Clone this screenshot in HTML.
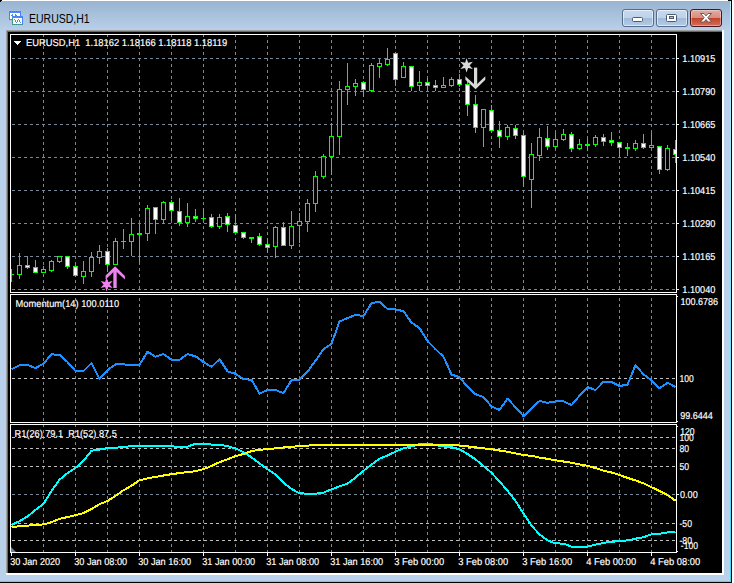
<!DOCTYPE html>
<html><head><meta charset="utf-8"><title>EURUSD,H1</title>
<style>
html,body{margin:0;padding:0;background:#fff;}
body{width:734px;height:583px;overflow:hidden;position:relative;font-family:"Liberation Sans",sans-serif;}
#win{position:absolute;left:0;top:1px;width:730px;height:580px;background:#b9d1ea;}
#cap{position:absolute;left:0;top:0;width:730px;height:30px;background:linear-gradient(#99b4d1,#b9d1ea);}
#edgeR{position:absolute;left:730px;top:1px;width:1px;height:581px;background:linear-gradient(#b4eeff,#42d8f8);}
#edgeB{position:absolute;left:0;top:581px;width:731px;height:1px;background:#42d8f8;}
#blkR{position:absolute;left:731px;top:0;width:1px;height:583px;background:#000;}
#blkB{position:absolute;left:0;top:582px;width:732px;height:1px;background:#000;}
#c1{position:absolute;left:0;top:0;width:2px;height:1px;background:#000}
#c2{position:absolute;left:0;top:0;width:1px;height:2px;background:#000}
#c3{position:absolute;left:728px;top:0;width:4px;height:1px;background:#000}
#bl1{position:absolute;left:6px;top:30px;width:716px;height:543px;background:#a0a0a0;}
#bl2{position:absolute;left:7px;top:31px;width:715px;height:542px;background:#696969;}
#wh{position:absolute;left:6px;top:30px;width:718px;height:545px;background:#fff;}
#title{position:absolute;left:28.6px;top:11px;transform:scaleX(0.84);font-size:12.5px;line-height:16px;color:#000;white-space:nowrap;transform-origin:0 0;}
.btn{position:absolute;top:9px;width:30px;height:16px;border:1px solid #566a89;border-radius:3px;box-shadow:inset 0 0 0 1px rgba(255,255,255,.55);}
.btn.n{background:linear-gradient(#c7d9ee 0%,#bed2ea 47%,#9fb9d8 50%,#b5cce6 100%);}
.btn.c{border-color:#4a1620;background:linear-gradient(#e3ada1 0%,#d88e80 47%,#c1412a 50%,#d26f55 100%);box-shadow:inset 0 0 0 1px rgba(255,255,255,.35);}
#chart{position:absolute;left:0;top:0;}
</style></head><body>
<div id="win"><div id="cap"></div></div>
<div id="edgeR"></div><div id="edgeB"></div><div id="blkR"></div><div id="blkB"></div>
<div id="c1"></div><div id="c2"></div><div id="c3"></div>
<div id="wh"></div><div id="bl1"></div><div id="bl2"></div>
<svg style="position:absolute;left:8px;top:10px" width="16" height="16" viewBox="0 0 16 16" shape-rendering="crispEdges">
<rect x="1" y="1" width="12" height="9" rx="1" fill="#4d88ff"/><rect x="2" y="3" width="10" height="6" fill="#fffef4"/>
<rect x="1.5" y="1.5" width="11" height="8" fill="none" stroke="#3f8f86" stroke-width="1" stroke-dasharray="1 1"/>
<rect x="3" y="5" width="2" height="1" fill="#4d88ff"/>
<rect x="4" y="4" width="1" height="1" fill="#4d88ff"/>
<rect x="7" y="4" width="1" height="1" fill="#4d88ff"/>
<rect x="7" y="5" width="2" height="1" fill="#4d88ff"/>
<rect x="8" y="6" width="2" height="1" fill="#4d88ff"/>
<rect x="4" y="6" width="11" height="9" rx="1" fill="#4d88ff"/><rect x="5" y="8" width="9" height="6" fill="#fffef4"/>
<rect x="4.5" y="6.5" width="10" height="8" fill="none" stroke="#3f8f86" stroke-width="1" stroke-dasharray="1 1"/>
<rect x="6" y="9" width="1" height="1" fill="#4d88ff"/>
<rect x="7" y="10" width="1" height="1" fill="#4d88ff"/>
<rect x="7" y="11" width="1" height="1" fill="#4d88ff"/>
<rect x="8" y="12" width="1" height="1" fill="#4d88ff"/>
<rect x="9" y="11" width="1" height="1" fill="#4d88ff"/>
<rect x="9" y="10" width="1" height="1" fill="#4d88ff"/>
<rect x="10" y="9" width="1" height="1" fill="#4d88ff"/>
<rect x="11" y="10" width="1" height="1" fill="#4d88ff"/>
<rect x="11" y="11" width="1" height="1" fill="#4d88ff"/>
<rect x="12" y="12" width="1" height="1" fill="#4d88ff"/>
</svg>
<div id="title">EURUSD,H1</div>
<div class="btn n" style="left:622px"></div>
<div class="btn n" style="left:656px"></div>
<div class="btn c" style="left:690px"></div>
<svg style="position:absolute;left:622px;top:9px" width="100" height="18" viewBox="0 0 100 18">
<rect x="10.5" y="8.5" width="10" height="4" rx="1" fill="#fff" stroke="#4b5b74" stroke-width="1"/>
<rect x="44.5" y="5.5" width="10" height="7" rx="1" fill="#fff" stroke="#4b5b74" stroke-width="1"/>
<rect x="47.5" y="7.5" width="4" height="2" fill="#a9c3e1" stroke="#4b5b74" stroke-width="1"/>
<path d="M78.5 4.5h3.5l2 2.4 2-2.4h3.5l-3.7 4.2 3.7 4.3h-3.5l-2-2.5-2 2.5h-3.5l3.7-4.3z" fill="#fff" stroke="#6b5a5e" stroke-width="1" stroke-linejoin="round"/>
</svg>
<svg id="chart" width="734" height="583" viewBox="0 0 734 583" shape-rendering="crispEdges" font-family="'Liberation Sans', sans-serif">
<rect x="8" y="32" width="714" height="541" fill="#000"/>
<g stroke="#778899" stroke-width="1" stroke-dasharray="3 3" fill="none">
<line x1="43.5" y1="34" x2="43.5" y2="552"/>
<line x1="75.5" y1="34" x2="75.5" y2="552"/>
<line x1="107.5" y1="34" x2="107.5" y2="552"/>
<line x1="139.5" y1="34" x2="139.5" y2="552"/>
<line x1="171.5" y1="34" x2="171.5" y2="552"/>
<line x1="203.5" y1="34" x2="203.5" y2="552"/>
<line x1="235.5" y1="34" x2="235.5" y2="552"/>
<line x1="267.5" y1="34" x2="267.5" y2="552"/>
<line x1="299.5" y1="34" x2="299.5" y2="552"/>
<line x1="331.5" y1="34" x2="331.5" y2="552"/>
<line x1="363.5" y1="34" x2="363.5" y2="552"/>
<line x1="395.5" y1="34" x2="395.5" y2="552"/>
<line x1="427.5" y1="34" x2="427.5" y2="552"/>
<line x1="459.5" y1="34" x2="459.5" y2="552"/>
<line x1="491.5" y1="34" x2="491.5" y2="552"/>
<line x1="523.5" y1="34" x2="523.5" y2="552"/>
<line x1="555.5" y1="34" x2="555.5" y2="552"/>
<line x1="587.5" y1="34" x2="587.5" y2="552"/>
<line x1="619.5" y1="34" x2="619.5" y2="552"/>
<line x1="651.5" y1="34" x2="651.5" y2="552"/>
<line x1="12" y1="58.5" x2="676" y2="58.5"/>
<line x1="12" y1="91.5" x2="676" y2="91.5"/>
<line x1="12" y1="124.5" x2="676" y2="124.5"/>
<line x1="12" y1="157.5" x2="676" y2="157.5"/>
<line x1="12" y1="190.5" x2="676" y2="190.5"/>
<line x1="12" y1="223.5" x2="676" y2="223.5"/>
<line x1="12" y1="256.5" x2="676" y2="256.5"/>
<line x1="12" y1="289.5" x2="676" y2="289.5"/>
<line x1="12" y1="494.5" x2="676" y2="494.5"/>
</g>
<g stroke="#c0c0c0" stroke-width="1" stroke-dasharray="3 3" fill="none">
<line x1="12" y1="378.5" x2="676" y2="378.5"/>
<line x1="12" y1="437.5" x2="676" y2="437.5"/>
<line x1="12" y1="448.5" x2="676" y2="448.5"/>
<line x1="12" y1="466.5" x2="676" y2="466.5"/>
<line x1="12" y1="523.5" x2="676" y2="523.5"/>
<line x1="12" y1="540.5" x2="676" y2="540.5"/>
</g>
<rect x="8" y="293" width="714" height="1" fill="#000"/>
<rect x="8" y="423" width="714" height="1" fill="#000"/>
<rect x="10.5" y="34.5" width="666" height="258" fill="none" stroke="#fff" stroke-width="1"/>
<rect x="10.5" y="294.5" width="666" height="128" fill="none" stroke="#fff" stroke-width="1"/>
<rect x="10.5" y="424.5" width="666" height="128" fill="none" stroke="#fff" stroke-width="1"/>
<g id="candles">
<rect x="11" y="269" width="1" height="13" fill="#00ff00"/>
<rect x="11" y="274" width="3" height="1" fill="#00ff00"/>
<rect x="19" y="253" width="1" height="26" fill="#00ff00"/>
<rect x="17" y="265" width="5" height="10" fill="#00ff00"/>
<rect x="18" y="266" width="3" height="8" fill="#000"/>
<rect x="27" y="256" width="1" height="13" fill="#00ff00"/>
<rect x="25" y="265" width="5" height="3" fill="#00ff00"/>
<rect x="26" y="266" width="3" height="1" fill="#fff"/>
<rect x="35" y="260" width="1" height="13" fill="#00ff00"/>
<rect x="33" y="267" width="5" height="6" fill="#00ff00"/>
<rect x="34" y="268" width="3" height="4" fill="#fff"/>
<rect x="43" y="266" width="1" height="7" fill="#00ff00"/>
<rect x="41" y="269" width="5" height="4" fill="#00ff00"/>
<rect x="42" y="270" width="3" height="2" fill="#000"/>
<rect x="51" y="260" width="1" height="12" fill="#00ff00"/>
<rect x="49" y="261" width="5" height="10" fill="#00ff00"/>
<rect x="50" y="262" width="3" height="8" fill="#000"/>
<rect x="59" y="256" width="1" height="7" fill="#00ff00"/>
<rect x="57" y="256" width="5" height="6" fill="#00ff00"/>
<rect x="58" y="257" width="3" height="4" fill="#000"/>
<rect x="67" y="256" width="1" height="13" fill="#00ff00"/>
<rect x="65" y="256" width="5" height="11" fill="#00ff00"/>
<rect x="66" y="257" width="3" height="9" fill="#fff"/>
<rect x="75" y="265" width="1" height="12" fill="#00ff00"/>
<rect x="73" y="266" width="5" height="10" fill="#00ff00"/>
<rect x="74" y="267" width="3" height="8" fill="#fff"/>
<rect x="83" y="261" width="1" height="23" fill="#00ff00"/>
<rect x="81" y="271" width="5" height="6" fill="#00ff00"/>
<rect x="82" y="272" width="3" height="4" fill="#000"/>
<rect x="91" y="252" width="1" height="25" fill="#00ff00"/>
<rect x="89" y="257" width="5" height="15" fill="#00ff00"/>
<rect x="90" y="258" width="3" height="13" fill="#000"/>
<rect x="99" y="245" width="1" height="19" fill="#00ff00"/>
<rect x="97" y="251" width="5" height="7" fill="#00ff00"/>
<rect x="98" y="252" width="3" height="5" fill="#000"/>
<rect x="107" y="248" width="1" height="24" fill="#00ff00"/>
<rect x="105" y="251" width="5" height="14" fill="#00ff00"/>
<rect x="106" y="252" width="3" height="12" fill="#fff"/>
<rect x="115" y="238" width="1" height="27" fill="#00ff00"/>
<rect x="113" y="241" width="5" height="24" fill="#00ff00"/>
<rect x="114" y="242" width="3" height="22" fill="#000"/>
<rect x="123" y="229" width="1" height="20" fill="#00ff00"/>
<rect x="121" y="241" width="5" height="1" fill="#00ff00"/>
<rect x="131" y="218" width="1" height="38" fill="#00ff00"/>
<rect x="129" y="234" width="5" height="8" fill="#00ff00"/>
<rect x="130" y="235" width="3" height="6" fill="#000"/>
<rect x="139" y="224" width="1" height="38" fill="#00ff00"/>
<rect x="137" y="233" width="5" height="2" fill="#00ff00"/>
<rect x="147" y="205" width="1" height="36" fill="#00ff00"/>
<rect x="145" y="208" width="5" height="26" fill="#00ff00"/>
<rect x="146" y="209" width="3" height="24" fill="#000"/>
<rect x="155" y="207" width="1" height="27" fill="#00ff00"/>
<rect x="153" y="207" width="5" height="13" fill="#00ff00"/>
<rect x="154" y="208" width="3" height="11" fill="#fff"/>
<rect x="163" y="201" width="1" height="23" fill="#00ff00"/>
<rect x="161" y="202" width="5" height="18" fill="#00ff00"/>
<rect x="162" y="203" width="3" height="16" fill="#000"/>
<rect x="171" y="200" width="1" height="21" fill="#00ff00"/>
<rect x="169" y="202" width="5" height="9" fill="#00ff00"/>
<rect x="170" y="203" width="3" height="7" fill="#fff"/>
<rect x="179" y="198" width="1" height="28" fill="#00ff00"/>
<rect x="177" y="211" width="5" height="12" fill="#00ff00"/>
<rect x="178" y="212" width="3" height="10" fill="#fff"/>
<rect x="187" y="203" width="1" height="24" fill="#00ff00"/>
<rect x="185" y="216" width="5" height="7" fill="#00ff00"/>
<rect x="186" y="217" width="3" height="5" fill="#000"/>
<rect x="195" y="209" width="1" height="13" fill="#00ff00"/>
<rect x="193" y="216" width="5" height="3" fill="#00ff00"/>
<rect x="194" y="217" width="3" height="1" fill="#fff"/>
<rect x="203" y="208" width="1" height="12" fill="#00ff00"/>
<rect x="201" y="218" width="5" height="1" fill="#00ff00"/>
<rect x="211" y="214" width="1" height="14" fill="#00ff00"/>
<rect x="209" y="217" width="5" height="10" fill="#00ff00"/>
<rect x="210" y="218" width="3" height="8" fill="#fff"/>
<rect x="219" y="214" width="1" height="15" fill="#00ff00"/>
<rect x="217" y="217" width="5" height="10" fill="#00ff00"/>
<rect x="218" y="218" width="3" height="8" fill="#000"/>
<rect x="227" y="213" width="1" height="19" fill="#00ff00"/>
<rect x="225" y="216" width="5" height="9" fill="#00ff00"/>
<rect x="226" y="217" width="3" height="7" fill="#fff"/>
<rect x="235" y="214" width="1" height="19" fill="#00ff00"/>
<rect x="233" y="225" width="5" height="8" fill="#00ff00"/>
<rect x="234" y="226" width="3" height="6" fill="#fff"/>
<rect x="243" y="232" width="1" height="7" fill="#00ff00"/>
<rect x="241" y="232" width="5" height="6" fill="#00ff00"/>
<rect x="242" y="233" width="3" height="4" fill="#fff"/>
<rect x="251" y="237" width="1" height="6" fill="#00ff00"/>
<rect x="249" y="237" width="5" height="2" fill="#00ff00"/>
<rect x="259" y="233" width="1" height="13" fill="#00ff00"/>
<rect x="257" y="236" width="5" height="9" fill="#00ff00"/>
<rect x="258" y="237" width="3" height="7" fill="#fff"/>
<rect x="267" y="238" width="1" height="15" fill="#00ff00"/>
<rect x="265" y="244" width="5" height="4" fill="#00ff00"/>
<rect x="266" y="245" width="3" height="2" fill="#fff"/>
<rect x="275" y="226" width="1" height="32" fill="#00ff00"/>
<rect x="273" y="227" width="5" height="20" fill="#00ff00"/>
<rect x="274" y="228" width="3" height="18" fill="#000"/>
<rect x="283" y="222" width="1" height="24" fill="#00ff00"/>
<rect x="281" y="227" width="5" height="19" fill="#00ff00"/>
<rect x="282" y="228" width="3" height="17" fill="#fff"/>
<rect x="291" y="211" width="1" height="38" fill="#00ff00"/>
<rect x="289" y="226" width="5" height="20" fill="#00ff00"/>
<rect x="290" y="227" width="3" height="18" fill="#000"/>
<rect x="299" y="213" width="1" height="30" fill="#00ff00"/>
<rect x="297" y="221" width="5" height="5" fill="#00ff00"/>
<rect x="298" y="222" width="3" height="3" fill="#000"/>
<rect x="307" y="199" width="1" height="33" fill="#00ff00"/>
<rect x="305" y="203" width="5" height="19" fill="#00ff00"/>
<rect x="306" y="204" width="3" height="17" fill="#000"/>
<rect x="315" y="171" width="1" height="41" fill="#00ff00"/>
<rect x="313" y="176" width="5" height="28" fill="#00ff00"/>
<rect x="314" y="177" width="3" height="26" fill="#000"/>
<rect x="323" y="154" width="1" height="25" fill="#00ff00"/>
<rect x="321" y="156" width="5" height="21" fill="#00ff00"/>
<rect x="322" y="157" width="3" height="19" fill="#000"/>
<rect x="331" y="123" width="1" height="52" fill="#00ff00"/>
<rect x="329" y="136" width="5" height="21" fill="#00ff00"/>
<rect x="330" y="137" width="3" height="19" fill="#000"/>
<rect x="339" y="81" width="1" height="74" fill="#00ff00"/>
<rect x="337" y="89" width="5" height="48" fill="#00ff00"/>
<rect x="338" y="90" width="3" height="46" fill="#000"/>
<rect x="347" y="63" width="1" height="42" fill="#00ff00"/>
<rect x="345" y="86" width="5" height="4" fill="#00ff00"/>
<rect x="346" y="87" width="3" height="2" fill="#000"/>
<rect x="355" y="79" width="1" height="17" fill="#00ff00"/>
<rect x="353" y="83" width="5" height="4" fill="#00ff00"/>
<rect x="354" y="84" width="3" height="2" fill="#000"/>
<rect x="363" y="81" width="1" height="16" fill="#00ff00"/>
<rect x="361" y="82" width="5" height="8" fill="#00ff00"/>
<rect x="362" y="83" width="3" height="6" fill="#fff"/>
<rect x="371" y="63" width="1" height="29" fill="#00ff00"/>
<rect x="369" y="65" width="5" height="26" fill="#00ff00"/>
<rect x="370" y="66" width="3" height="24" fill="#000"/>
<rect x="379" y="59" width="1" height="19" fill="#00ff00"/>
<rect x="377" y="63" width="5" height="4" fill="#00ff00"/>
<rect x="378" y="64" width="3" height="2" fill="#000"/>
<rect x="387" y="48" width="1" height="18" fill="#00ff00"/>
<rect x="385" y="59" width="5" height="6" fill="#00ff00"/>
<rect x="386" y="60" width="3" height="4" fill="#000"/>
<rect x="395" y="52" width="1" height="34" fill="#00ff00"/>
<rect x="393" y="53" width="5" height="27" fill="#00ff00"/>
<rect x="394" y="54" width="3" height="25" fill="#fff"/>
<rect x="403" y="62" width="1" height="16" fill="#00ff00"/>
<rect x="401" y="66" width="5" height="12" fill="#00ff00"/>
<rect x="402" y="67" width="3" height="10" fill="#000"/>
<rect x="411" y="66" width="1" height="25" fill="#00ff00"/>
<rect x="409" y="66" width="5" height="21" fill="#00ff00"/>
<rect x="410" y="67" width="3" height="19" fill="#fff"/>
<rect x="419" y="71" width="1" height="20" fill="#00ff00"/>
<rect x="417" y="82" width="5" height="4" fill="#00ff00"/>
<rect x="418" y="83" width="3" height="2" fill="#000"/>
<rect x="427" y="78" width="1" height="13" fill="#00ff00"/>
<rect x="425" y="82" width="5" height="4" fill="#00ff00"/>
<rect x="426" y="83" width="3" height="2" fill="#fff"/>
<rect x="435" y="80" width="1" height="11" fill="#00ff00"/>
<rect x="433" y="85" width="5" height="3" fill="#00ff00"/>
<rect x="434" y="86" width="3" height="1" fill="#fff"/>
<rect x="443" y="77" width="1" height="11" fill="#00ff00"/>
<rect x="441" y="85" width="5" height="3" fill="#00ff00"/>
<rect x="442" y="86" width="3" height="1" fill="#000"/>
<rect x="451" y="77" width="1" height="10" fill="#00ff00"/>
<rect x="449" y="79" width="5" height="7" fill="#00ff00"/>
<rect x="450" y="80" width="3" height="5" fill="#000"/>
<rect x="459" y="74" width="1" height="13" fill="#00ff00"/>
<rect x="457" y="79" width="5" height="6" fill="#00ff00"/>
<rect x="458" y="80" width="3" height="4" fill="#fff"/>
<rect x="467" y="81" width="1" height="35" fill="#00ff00"/>
<rect x="465" y="84" width="5" height="21" fill="#00ff00"/>
<rect x="466" y="85" width="3" height="19" fill="#fff"/>
<rect x="475" y="95" width="1" height="38" fill="#00ff00"/>
<rect x="473" y="104" width="5" height="24" fill="#00ff00"/>
<rect x="474" y="105" width="3" height="22" fill="#fff"/>
<rect x="483" y="109" width="1" height="38" fill="#00ff00"/>
<rect x="481" y="109" width="5" height="19" fill="#00ff00"/>
<rect x="482" y="110" width="3" height="17" fill="#000"/>
<rect x="491" y="105" width="1" height="28" fill="#00ff00"/>
<rect x="489" y="110" width="5" height="21" fill="#00ff00"/>
<rect x="490" y="111" width="3" height="19" fill="#fff"/>
<rect x="499" y="121" width="1" height="27" fill="#00ff00"/>
<rect x="497" y="130" width="5" height="7" fill="#00ff00"/>
<rect x="498" y="131" width="3" height="5" fill="#fff"/>
<rect x="507" y="125" width="1" height="15" fill="#00ff00"/>
<rect x="505" y="127" width="5" height="10" fill="#00ff00"/>
<rect x="506" y="128" width="3" height="8" fill="#000"/>
<rect x="515" y="125" width="1" height="14" fill="#00ff00"/>
<rect x="513" y="128" width="5" height="8" fill="#00ff00"/>
<rect x="514" y="129" width="3" height="6" fill="#fff"/>
<rect x="523" y="133" width="1" height="54" fill="#00ff00"/>
<rect x="521" y="135" width="5" height="42" fill="#00ff00"/>
<rect x="522" y="136" width="3" height="40" fill="#fff"/>
<rect x="531" y="143" width="1" height="65" fill="#00ff00"/>
<rect x="529" y="154" width="5" height="26" fill="#00ff00"/>
<rect x="530" y="155" width="3" height="24" fill="#000"/>
<rect x="539" y="128" width="1" height="33" fill="#00ff00"/>
<rect x="537" y="137" width="5" height="19" fill="#00ff00"/>
<rect x="538" y="138" width="3" height="17" fill="#000"/>
<rect x="547" y="126" width="1" height="24" fill="#00ff00"/>
<rect x="545" y="138" width="5" height="9" fill="#00ff00"/>
<rect x="546" y="139" width="3" height="7" fill="#fff"/>
<rect x="555" y="133" width="1" height="16" fill="#00ff00"/>
<rect x="553" y="139" width="5" height="8" fill="#00ff00"/>
<rect x="554" y="140" width="3" height="6" fill="#000"/>
<rect x="563" y="129" width="1" height="12" fill="#00ff00"/>
<rect x="561" y="134" width="5" height="6" fill="#00ff00"/>
<rect x="562" y="135" width="3" height="4" fill="#000"/>
<rect x="571" y="132" width="1" height="20" fill="#00ff00"/>
<rect x="569" y="134" width="5" height="15" fill="#00ff00"/>
<rect x="570" y="135" width="3" height="13" fill="#fff"/>
<rect x="579" y="139" width="1" height="11" fill="#00ff00"/>
<rect x="577" y="144" width="5" height="5" fill="#00ff00"/>
<rect x="578" y="145" width="3" height="3" fill="#000"/>
<rect x="587" y="139" width="1" height="12" fill="#00ff00"/>
<rect x="585" y="144" width="5" height="2" fill="#00ff00"/>
<rect x="595" y="135" width="1" height="12" fill="#00ff00"/>
<rect x="593" y="137" width="5" height="8" fill="#00ff00"/>
<rect x="594" y="138" width="3" height="6" fill="#000"/>
<rect x="603" y="134" width="1" height="12" fill="#00ff00"/>
<rect x="601" y="137" width="5" height="5" fill="#00ff00"/>
<rect x="602" y="138" width="3" height="3" fill="#fff"/>
<rect x="611" y="132" width="1" height="14" fill="#00ff00"/>
<rect x="609" y="140" width="5" height="3" fill="#00ff00"/>
<rect x="610" y="141" width="3" height="1" fill="#fff"/>
<rect x="619" y="142" width="1" height="15" fill="#00ff00"/>
<rect x="617" y="142" width="5" height="6" fill="#00ff00"/>
<rect x="618" y="143" width="3" height="4" fill="#fff"/>
<rect x="627" y="143" width="1" height="13" fill="#00ff00"/>
<rect x="625" y="147" width="5" height="2" fill="#00ff00"/>
<rect x="635" y="140" width="1" height="11" fill="#00ff00"/>
<rect x="633" y="143" width="5" height="6" fill="#00ff00"/>
<rect x="634" y="144" width="3" height="4" fill="#000"/>
<rect x="643" y="134" width="1" height="15" fill="#00ff00"/>
<rect x="641" y="143" width="5" height="5" fill="#00ff00"/>
<rect x="642" y="144" width="3" height="3" fill="#fff"/>
<rect x="651" y="133" width="1" height="15" fill="#00ff00"/>
<rect x="649" y="145" width="5" height="3" fill="#00ff00"/>
<rect x="650" y="146" width="3" height="1" fill="#000"/>
<rect x="659" y="146" width="1" height="28" fill="#00ff00"/>
<rect x="657" y="146" width="5" height="24" fill="#00ff00"/>
<rect x="658" y="147" width="3" height="22" fill="#fff"/>
<rect x="667" y="145" width="1" height="26" fill="#00ff00"/>
<rect x="665" y="148" width="5" height="22" fill="#00ff00"/>
<rect x="666" y="149" width="3" height="20" fill="#000"/>
<rect x="675" y="140" width="1" height="23" fill="#00ff00"/>
<rect x="673" y="149" width="3" height="6" fill="#00ff00"/>
<rect x="674" y="150" width="2" height="4" fill="#fff"/>
</g>
<path d="M11.5 369.3 L19.5 365.2 L27.5 364.9 L35.5 368.2 L43.5 363.6 L51.5 354.3 L59.5 354.9 L67.5 362.0 L75.5 371.0 L83.5 371.0 L91.5 363.1 L99.5 379.1 L107.5 370.1 L115.5 364.4 L123.5 364.4 L131.5 364.9 L139.5 364.9 L147.5 351.8 L155.5 356.7 L163.5 354.1 L171.5 359.8 L179.5 359.8 L187.5 354.1 L195.5 356.3 L203.5 362.0 L211.5 366.9 L219.5 359.2 L227.5 371.3 L235.5 373.8 L243.5 379.3 L251.5 379.7 L259.5 393.7 L267.5 390.0 L275.5 390.0 L283.5 393.2 L291.5 380.0 L299.5 379.7 L307.5 371.6 L315.5 360.8 L323.5 349.1 L331.5 344.0 L339.5 321.5 L347.5 318.1 L355.5 314.8 L363.5 316.1 L371.5 303.1 L379.5 301.8 L387.5 308.9 L395.5 309.4 L403.5 311.2 L411.5 322.6 L419.5 328.0 L427.5 340.9 L435.5 349.1 L443.5 356.8 L451.5 374.5 L459.5 377.2 L467.5 386.8 L475.5 394.1 L483.5 397.1 L491.5 406.4 L499.5 410.0 L507.5 398.7 L515.5 407.2 L523.5 416.2 L531.5 408.5 L539.5 401.0 L547.5 402.8 L555.5 401.5 L563.5 401.2 L571.5 405.1 L579.5 395.8 L587.5 387.1 L595.5 390.0 L603.5 381.9 L611.5 381.9 L619.5 386.0 L627.5 384.7 L635.5 365.0 L643.5 374.5 L651.5 380.2 L659.5 388.1 L667.5 382.7 L675.5 387.1" fill="none" stroke="#1e90ff" stroke-width="2" stroke-linejoin="round" shape-rendering="crispEdges"/>
<path d="M11.5 525.0 L19.5 521.2 L27.5 516.5 L35.5 509.9 L43.5 503.9 L51.5 491.0 L59.5 479.7 L67.5 473.1 L75.5 468.0 L83.5 460.8 L91.5 450.8 L99.5 449.5 L107.5 448.2 L115.5 447.6 L123.5 447.3 L131.5 446.0 L139.5 445.6 L147.5 445.6 L155.5 445.6 L163.5 445.6 L171.5 446.4 L179.5 446.7 L187.5 446.7 L195.5 443.7 L203.5 443.7 L211.5 444.6 L219.5 444.8 L227.5 446.0 L235.5 448.5 L243.5 452.1 L251.5 457.3 L259.5 463.4 L267.5 469.2 L275.5 474.6 L283.5 482.8 L291.5 488.9 L299.5 493.3 L307.5 493.7 L315.5 493.7 L323.5 492.7 L331.5 489.3 L339.5 486.4 L347.5 483.7 L355.5 477.5 L363.5 470.8 L371.5 464.5 L379.5 458.8 L387.5 455.5 L395.5 451.7 L403.5 448.3 L411.5 446.4 L419.5 444.1 L427.5 443.5 L435.5 445.0 L443.5 446.4 L451.5 447.3 L459.5 449.2 L467.5 454.0 L475.5 459.3 L483.5 466.0 L491.5 472.7 L499.5 481.5 L507.5 490.6 L515.5 501.0 L523.5 513.5 L531.5 525.7 L539.5 534.3 L547.5 540.4 L555.5 543.4 L563.5 543.6 L571.5 546.6 L579.5 546.6 L587.5 546.6 L595.5 544.6 L603.5 542.9 L611.5 541.7 L619.5 541.2 L627.5 540.4 L635.5 538.7 L643.5 537.3 L651.5 534.3 L659.5 533.8 L667.5 532.4 L675.5 531.9" fill="none" stroke="#00ffff" stroke-width="2" stroke-linejoin="round" shape-rendering="crispEdges"/>
<path d="M11.5 526.9 L19.5 526.3 L27.5 525.6 L35.5 525.0 L43.5 524.4 L51.5 522.2 L59.5 518.8 L67.5 517.1 L75.5 515.2 L83.5 513.1 L91.5 509.0 L99.5 504.2 L107.5 501.0 L115.5 495.8 L123.5 490.3 L131.5 485.7 L139.5 480.3 L147.5 478.4 L155.5 476.9 L163.5 475.5 L171.5 474.2 L179.5 473.1 L187.5 472.1 L195.5 471.2 L203.5 469.2 L211.5 466.0 L219.5 462.2 L227.5 459.3 L235.5 456.1 L243.5 454.0 L251.5 451.1 L259.5 449.8 L267.5 449.2 L275.5 448.3 L283.5 447.5 L291.5 446.9 L299.5 446.0 L307.5 445.6 L315.5 445.2 L323.5 444.6 L331.5 444.6 L339.5 444.6 L347.5 444.6 L355.5 444.6 L363.5 444.6 L371.5 444.6 L379.5 444.6 L387.5 444.6 L395.5 444.6 L403.5 444.6 L411.5 444.6 L419.5 444.6 L427.5 444.6 L435.5 444.6 L443.5 444.6 L451.5 444.6 L459.5 445.6 L467.5 446.4 L475.5 447.3 L483.5 448.3 L491.5 449.2 L499.5 450.5 L507.5 451.7 L515.5 453.4 L523.5 455.1 L531.5 455.8 L539.5 457.6 L547.5 458.8 L555.5 460.3 L563.5 461.5 L571.5 462.7 L579.5 464.4 L587.5 465.7 L595.5 468.1 L603.5 470.6 L611.5 472.5 L619.5 475.0 L627.5 477.9 L635.5 480.4 L643.5 483.3 L651.5 487.2 L659.5 490.9 L667.5 495.1 L675.5 500.7" fill="none" stroke="#ffff00" stroke-width="2" stroke-linejoin="round" shape-rendering="crispEdges"/>
<g fill="#ee82ee" shape-rendering="geometricPrecision">
<rect x="113.3" y="269" width="3.4" height="19"/>
<polygon points="115.1,266.3 124.9,276 124.9,279.6 115.1,270.4 105.6,279.6 105.6,275.6"/>
</g>
<polygon points="106.60,277.50 108.10,281.90 112.66,281.00 109.60,284.50 112.66,288.00 108.10,287.10 106.60,291.50 105.10,287.10 100.54,288.00 103.60,284.50 100.54,281.00 105.10,281.90" fill="#ee82ee" shape-rendering="geometricPrecision"/>
<g fill="#d9d9d9" shape-rendering="geometricPrecision">
<rect x="474" y="67.6" width="3.2" height="19"/>
<polygon points="475.6,89.3 485.3,79.8 485.3,76.2 475.6,85.4 465.4,76.2 465.4,79.8"/>
</g>
<polygon points="466.60,58.20 468.10,62.80 472.84,61.80 469.60,65.40 472.84,69.00 468.10,68.00 466.60,72.60 465.10,68.00 460.36,69.00 463.60,65.40 460.36,61.80 465.10,62.80" fill="#d9d9d9" shape-rendering="geometricPrecision"/>
<rect x="14" y="41" width="7" height="1" fill="#fff"/>
<rect x="15" y="42" width="5" height="1" fill="#fff"/>
<rect x="16" y="43" width="3" height="1" fill="#fff"/>
<rect x="17" y="44" width="1" height="1" fill="#fff"/>
<polygon points="11,547 11,552 16,552" fill="#6d8299" shape-rendering="geometricPrecision"/>
<rect x="677" y="58" width="2" height="1" fill="#fff"/>
<rect x="677" y="91" width="2" height="1" fill="#fff"/>
<rect x="677" y="124" width="2" height="1" fill="#fff"/>
<rect x="677" y="157" width="2" height="1" fill="#fff"/>
<rect x="677" y="190" width="2" height="1" fill="#fff"/>
<rect x="677" y="223" width="2" height="1" fill="#fff"/>
<rect x="677" y="256" width="2" height="1" fill="#fff"/>
<rect x="677" y="289" width="2" height="1" fill="#fff"/>
<rect x="677" y="494" width="2" height="1" fill="#fff"/>
<rect x="677" y="296" width="1" height="1" fill="#fff"/>
<rect x="677" y="421" width="1" height="1" fill="#fff"/>
<rect x="677" y="426" width="1" height="1" fill="#fff"/>
<rect x="677" y="551" width="1" height="1" fill="#fff"/>
<rect x="11" y="553" width="1" height="3" fill="#fff"/>
<rect x="75" y="553" width="1" height="3" fill="#fff"/>
<rect x="139" y="553" width="1" height="3" fill="#fff"/>
<rect x="203" y="553" width="1" height="3" fill="#fff"/>
<rect x="267" y="553" width="1" height="3" fill="#fff"/>
<rect x="331" y="553" width="1" height="3" fill="#fff"/>
<rect x="395" y="553" width="1" height="3" fill="#fff"/>
<rect x="459" y="553" width="1" height="3" fill="#fff"/>
<rect x="523" y="553" width="1" height="3" fill="#fff"/>
<rect x="587" y="553" width="1" height="3" fill="#fff"/>
<rect x="651" y="553" width="1" height="3" fill="#fff"/>
<g shape-rendering="geometricPrecision" text-rendering="geometricPrecision" stroke="#fff" stroke-width="0.18">
<text x="26.0" y="46" font-size="10" fill="#fff" textLength="201.2" lengthAdjust="spacingAndGlyphs">EURUSD,H1&#160;&#160;1.18162 1.18166 1.18118 1.18119</text>
<text x="15.6" y="307" font-size="10" fill="#fff" textLength="103.6" lengthAdjust="spacingAndGlyphs">Momentum(14) 100.0110</text>
<text x="14.6" y="437" font-size="10" fill="#fff" textLength="102.2" lengthAdjust="spacingAndGlyphs">R1(26) 79.1&#160;&#160;R1(52) 87.5</text>
<text x="682.3" y="62" font-size="10" fill="#fff" textLength="33.1" lengthAdjust="spacingAndGlyphs">1.10915</text>
<text x="682.3" y="95" font-size="10" fill="#fff" textLength="33.1" lengthAdjust="spacingAndGlyphs">1.10790</text>
<text x="682.3" y="128" font-size="10" fill="#fff" textLength="33.1" lengthAdjust="spacingAndGlyphs">1.10665</text>
<text x="682.3" y="161" font-size="10" fill="#fff" textLength="33.1" lengthAdjust="spacingAndGlyphs">1.10540</text>
<text x="682.3" y="194" font-size="10" fill="#fff" textLength="33.1" lengthAdjust="spacingAndGlyphs">1.10415</text>
<text x="682.3" y="227" font-size="10" fill="#fff" textLength="33.1" lengthAdjust="spacingAndGlyphs">1.10290</text>
<text x="682.3" y="260" font-size="10" fill="#fff" textLength="33.1" lengthAdjust="spacingAndGlyphs">1.10165</text>
<text x="682.3" y="293" font-size="10" fill="#fff" textLength="33.1" lengthAdjust="spacingAndGlyphs">1.10040</text>
<text x="680.5" y="305" font-size="10" fill="#fff" textLength="37.6" lengthAdjust="spacingAndGlyphs">100.6786</text>
<text x="679.6" y="382" font-size="10" fill="#fff" textLength="14.2" lengthAdjust="spacingAndGlyphs">100</text>
<text x="680.2" y="419" font-size="10" fill="#fff" textLength="32.7" lengthAdjust="spacingAndGlyphs">99.6444</text>
<text x="680.2" y="435" font-size="10" fill="#fff" textLength="14.5" lengthAdjust="spacingAndGlyphs">120</text>
<text x="679.6" y="441" font-size="10" fill="#fff" textLength="14.2" lengthAdjust="spacingAndGlyphs">100</text>
<text x="679.4" y="452" font-size="10" fill="#fff" textLength="9.6" lengthAdjust="spacingAndGlyphs">80</text>
<text x="679.4" y="470" font-size="10" fill="#fff" textLength="9.6" lengthAdjust="spacingAndGlyphs">50</text>
<text x="680" y="498" font-size="10" fill="#fff" textLength="17.7" lengthAdjust="spacingAndGlyphs">0.00</text>
<text x="679.4" y="527" font-size="10" fill="#fff" textLength="12.6" lengthAdjust="spacingAndGlyphs">-50</text>
<text x="679.4" y="544" font-size="10" fill="#fff" textLength="12.6" lengthAdjust="spacingAndGlyphs">-80</text>
<text x="680.8" y="549" font-size="10" fill="#fff" textLength="17.1" lengthAdjust="spacingAndGlyphs">-100</text>
<text x="10.2" y="565" font-size="10" fill="#fff" textLength="49.9" lengthAdjust="spacingAndGlyphs">30 Jan 2020</text>
<text x="74.2" y="565" font-size="10" fill="#fff" textLength="53.0" lengthAdjust="spacingAndGlyphs">30 Jan 08:00</text>
<text x="138.2" y="565" font-size="10" fill="#fff" textLength="53.0" lengthAdjust="spacingAndGlyphs">30 Jan 16:00</text>
<text x="202.2" y="565" font-size="10" fill="#fff" textLength="53.0" lengthAdjust="spacingAndGlyphs">31 Jan 00:00</text>
<text x="266.2" y="565" font-size="10" fill="#fff" textLength="53.0" lengthAdjust="spacingAndGlyphs">31 Jan 08:00</text>
<text x="330.2" y="565" font-size="10" fill="#fff" textLength="53.0" lengthAdjust="spacingAndGlyphs">31 Jan 16:00</text>
<text x="394.2" y="565" font-size="10" fill="#fff" textLength="50.0" lengthAdjust="spacingAndGlyphs">3 Feb 00:00</text>
<text x="458.2" y="565" font-size="10" fill="#fff" textLength="50.0" lengthAdjust="spacingAndGlyphs">3 Feb 08:00</text>
<text x="522.2" y="565" font-size="10" fill="#fff" textLength="50.0" lengthAdjust="spacingAndGlyphs">3 Feb 16:00</text>
<text x="586.2" y="565" font-size="10" fill="#fff" textLength="50.0" lengthAdjust="spacingAndGlyphs">4 Feb 00:00</text>
<text x="650.2" y="565" font-size="10" fill="#fff" textLength="50.0" lengthAdjust="spacingAndGlyphs">4 Feb 08:00</text>
</g>
</svg>
</body></html>
